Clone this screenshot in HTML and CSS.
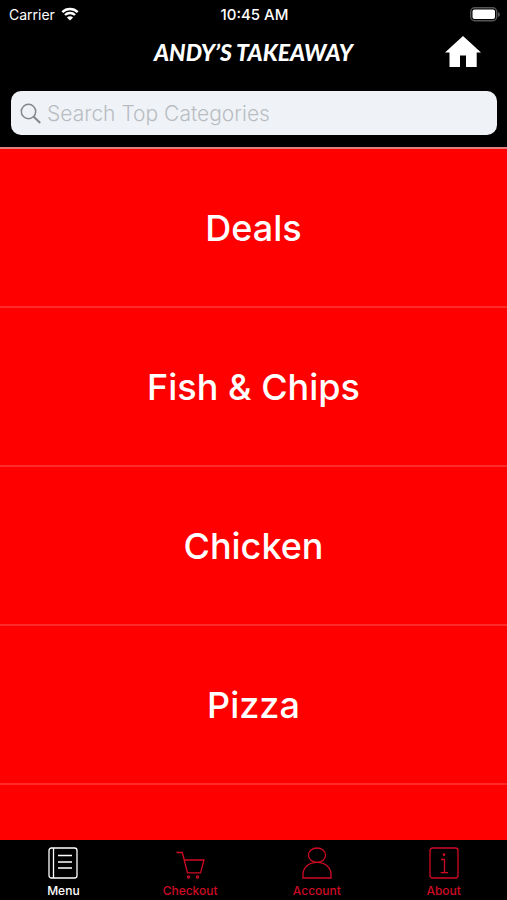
FILE: index.html
```html
<!DOCTYPE html>
<html lang="en">
<head>
<meta charset="utf-8">
<meta name="viewport" content="width=device-width, initial-scale=1">
<title>Andy's Takeaway</title>
<link rel="stylesheet" href="styles.css">
</head>
<body>
<header class="header">
  <div class="status">
    <span class="carrier">Carrier
      <svg class="wifi" viewBox="0 0 18 14" aria-hidden="true"><path d="M1.3 5.1a11 11 0 0 1 15.4 0M4 8a7.1 7.1 0 0 1 10 0" fill="none" stroke="#fff" stroke-width="2.4"/><path d="M9 13.6 5.9 10.5a4.4 4.4 0 0 1 6.2 0z" fill="#fff"/></svg>
    </span>
    <span class="time">10:45 AM</span>
    <svg class="battery" viewBox="0 0 30 15" aria-hidden="true"><rect x=".7" y=".7" width="26" height="13" rx="4" fill="none" stroke="#555" stroke-width="1.4"/><rect x="2.5" y="2.5" width="22.5" height="9.5" rx="2" fill="#fff"/><path d="M28 5v5q2-1 2-2.5T28 5z" fill="#555"/></svg>
  </div>
  <div class="titlebar">
    <h1 class="title">ANDY’S TAKEAWAY</h1>
    <a class="home" href="#" aria-label="Home"><svg viewBox="0 0 36 32" aria-hidden="true"><path d="M18 0 36 16.5H31.700V31H21V19.500H15V31H4.500V16.500H0z" fill="#fff"/></svg></a>
  </div>
  <label class="search">
    <svg class="lens" viewBox="0 0 22 22" aria-hidden="true"><circle cx="8.500" cy="8.500" r="7.200" fill="none" stroke="#85888b" stroke-width="1.500"/><path d="m13.700 13.700 6.500 6.300" stroke="#85888b" stroke-width="2"/></svg>
    <input class="query" type="search" placeholder="Search Top Categories" aria-label="Search Top Categories">
  </label>
</header>
<main class="categories">
  <a class="category" href="#">Deals</a>
  <a class="category" href="#">Fish &amp; Chips</a>
  <a class="category" href="#">Chicken</a>
  <a class="category" href="#">Pizza</a>
</main>
<nav class="tabs">
  <a class="tab active" href="#">
    <svg class="icon" viewBox="0 0 32 34" aria-hidden="true"><rect x="2" y="2" width="28" height="30" rx="2.500"/><path d="M6.500 2v30M11 9.500h14M11 16h14M11 22h14"/></svg>
    Menu</a>
  <a class="tab" href="#">
    <svg class="icon" viewBox="0 0 32 34" aria-hidden="true"><path d="M2.500 6.500h5.800l5.200 20.300h13L30 14H10.300"/><circle cx="14.500" cy="31" r="1.100"/><circle cx="23.500" cy="31" r="1.100"/></svg>
    Checkout</a>
  <a class="tab" href="#">
    <svg class="icon" viewBox="0 0 32 34" aria-hidden="true"><ellipse cx="16" cy="9.200" rx="8.500" ry="7.200"/><path d="M2 32v-3.500c0-7 6-12.100 14-12.100s14 5.100 14 12.100V32z"/></svg>
    Account</a>
  <a class="tab" href="#">
    <svg class="icon" viewBox="0 0 32 34" aria-hidden="true"><rect x="2" y="2" width="28" height="30" rx="2.500"/><path d="M13 13.500h3.500v13M12.700 26.700h7.300"/><circle cx="16" cy="8.700" r=".7"/></svg>
    About</a>
</nav>
</body>
</html>
```

FILE: styles.css
```css
* {
  box-sizing: border-box;
}

body {
  margin: 0;
  height: 100vh;
  display: flex;
  flex-direction: column;
  background: #000;
  color: #fff;
  font-family: Inter, "Liberation Sans", sans-serif;
}

a {
  color: inherit;
  text-decoration: none;
}

svg {
  display: block;
}

.header {
  flex: none;
  border-bottom: 2px solid #e08080;
}

.status {
  display: grid;
  grid-template-columns: 1fr auto 1fr;
  align-items: center;
  height: 28px;
  padding: 0 7px 0 9px;
  font-size: 14px;
}

.carrier {
  display: flex;
  align-items: center;
  gap: 6px;
}

.wifi {
  width: 18px;
  height: 14px;
}

.time {
  font-size: 15px;
  font-weight: 500;
}

.battery {
  width: 30px;
  height: 15px;
  justify-self: end;
}

.titlebar {
  display: grid;
  grid-template-columns: 1fr auto 1fr;
  align-items: center;
  height: 48px;
  padding: 0 26px;
}

.title {
  grid-column: 2;
  margin: 0;
  font: italic 900 23px/48px Lato, sans-serif;
}

.home {
  justify-self: end;
}

.home svg {
  width: 36px;
  height: 32px;
}

.search {
  display: flex;
  align-items: center;
  gap: 5px;
  height: 44px;
  margin: 15px 10px 12px 11px;
  padding: 2px 9px 0;
  border-radius: 10px;
  background: #eff3f7;
}

.lens {
  flex: none;
  width: 22px;
  height: 22px;
}

.query {
  flex: 1;
  min-width: 0;
  padding: 0;
  border: 0;
  outline: 0;
  background: none;
  color: #444;
  font: 300 21px/28px Inter, sans-serif;
  appearance: none;
}

.query::placeholder {
  color: #b9bdc2;
}

.categories {
  flex: 1;
  min-height: 0;
  overflow-y: auto;
  scrollbar-width: none;
  background: #f00;
}

.category {
  display: flex;
  align-items: center;
  justify-content: center;
  height: 159px;
  border-bottom: 2px solid #ff2a2a;
  font-size: 36px;
  font-weight: 500;
}

.tabs {
  flex: none;
  display: grid;
  grid-template-columns: repeat(4, 1fr);
  height: 60px;
  padding-top: 6px;
}

.tab {
  display: flex;
  flex-direction: column;
  align-items: center;
  color: #cf0a24;
  font-size: 12px;
  font-weight: 500;
  line-height: 22px;
}

.active {
  color: #fff;
}

.icon {
  width: 32px;
  height: 34px;
  fill: none;
  stroke: currentColor;
  stroke-width: 1.3;
}
```
